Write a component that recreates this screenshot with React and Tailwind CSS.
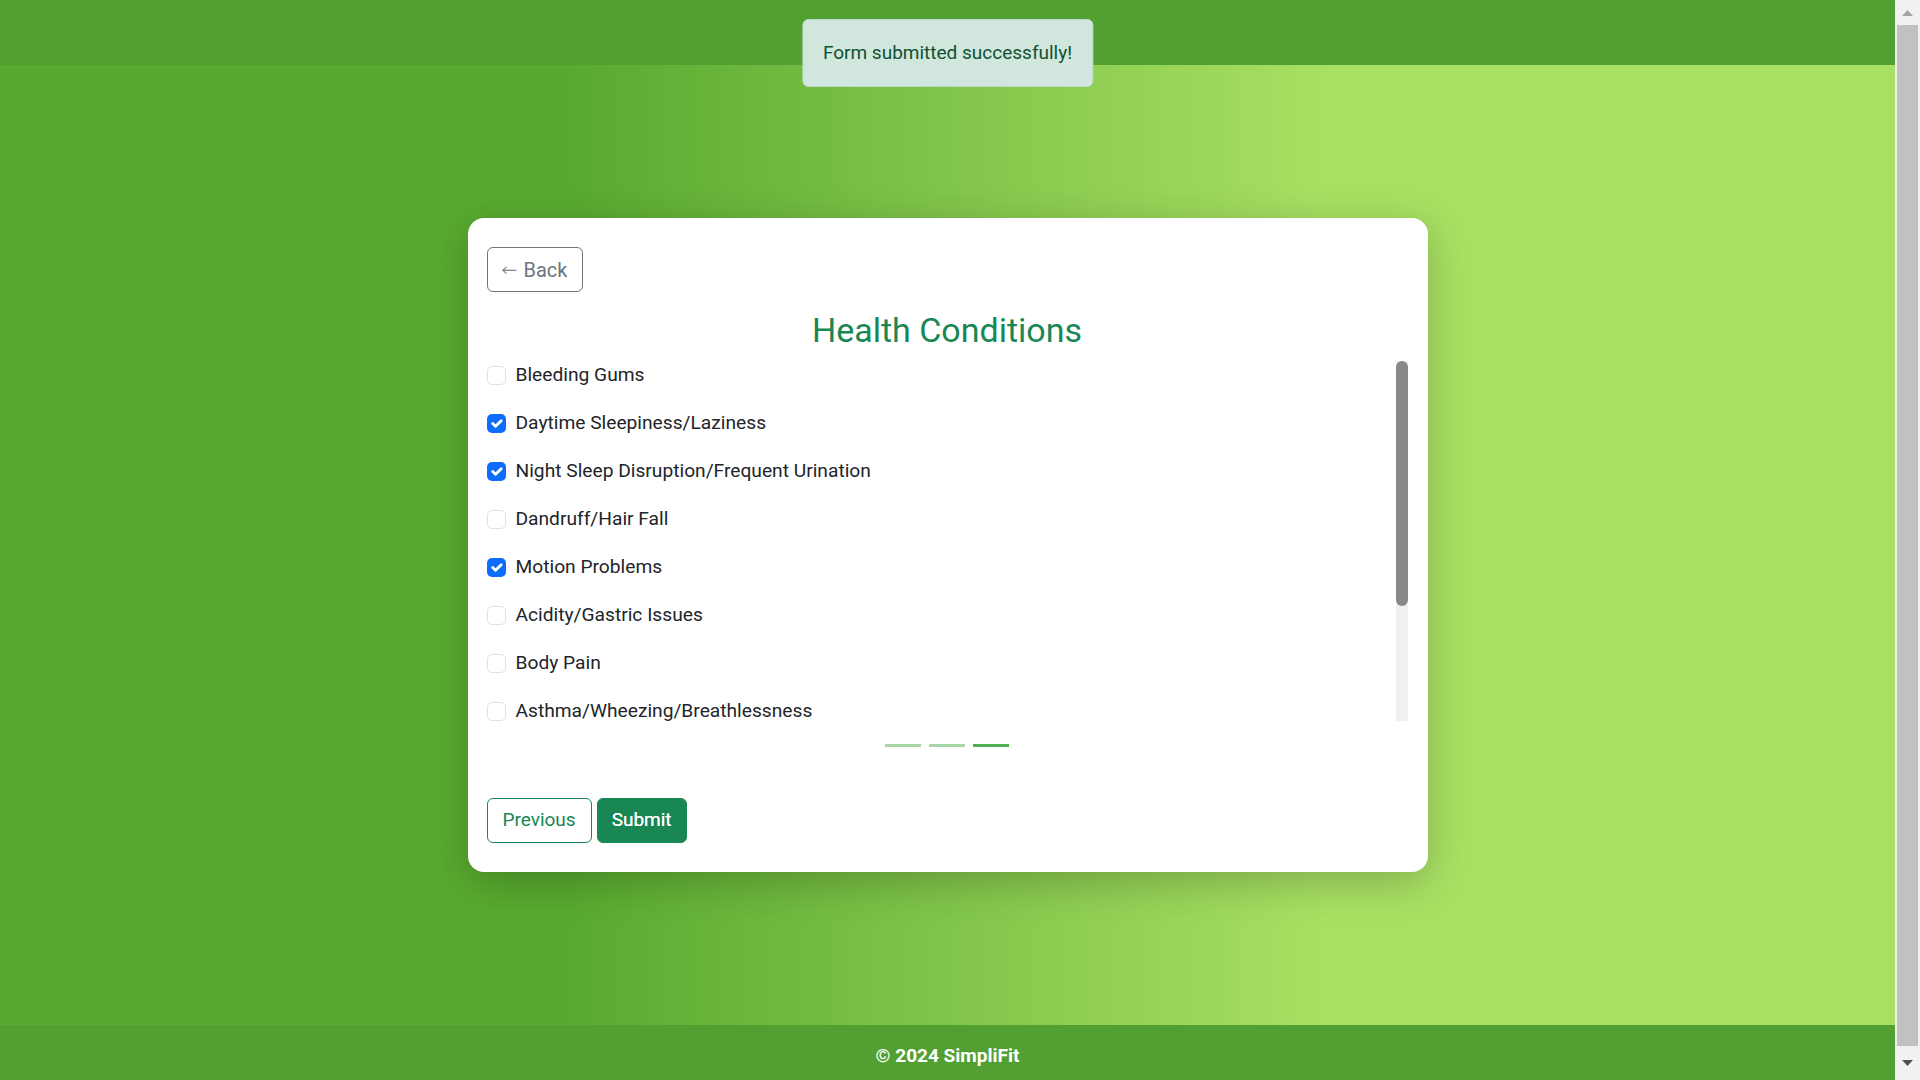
import React from "react";

const items = [
  { label: "Bleeding Gums", checked: false },
  { label: "Daytime Sleepiness/Laziness", checked: true },
  { label: "Night Sleep Disruption/Frequent Urination", checked: true },
  { label: "Dandruff/Hair Fall", checked: false },
  { label: "Motion Problems", checked: true },
  { label: "Acidity/Gastric Issues", checked: false },
  { label: "Body Pain", checked: false },
  { label: "Asthma/Wheezing/Breathlessness", checked: false },
];

function Checkbox({ checked }) {
  if (checked) {
    return (
      <span className="flex h-[19px] w-[19px] shrink-0 items-center justify-center rounded-[5px] bg-[#0d6efd]">
        <svg viewBox="0 0 20 20" className="h-[19px] w-[19px]">
          <path d="m6 10 3 3 6-6" fill="none" stroke="#fff" strokeWidth="3" strokeLinecap="round" strokeLinejoin="round" />
        </svg>
      </span>
    );
  }
  return <span className="h-[19px] w-[19px] shrink-0 rounded-[5px] border border-[#dee2e6] bg-white" />;
}

export default function App() {
  return (
    <div className="flex h-screen w-full overflow-hidden font-['Roboto',sans-serif]">
      <div className="relative flex min-w-0 flex-1 flex-col">
        <header className="h-[65px] shrink-0 bg-[#52a032]" />
        <main className="flex flex-1 items-center justify-center bg-gradient-to-r from-[#58aa2f] from-30% to-[#a8e063] to-70%">
          <div className="flex w-[960px] flex-col rounded-2xl bg-white pb-[29px] pl-[19px] pr-5 pt-[29px] shadow-[0_10px_40px_rgba(0,0,0,0.22)]">
            <div>
              <button className="flex h-[45px] items-center gap-[6px] rounded-[6px] border border-[#6c757d] pl-[14px] pr-[15px] text-[20px] text-[#6c757d]">
                <span className="font-['DejaVu_Sans',sans-serif] text-[19px] font-light leading-none">←</span>
                <span>Back</span>
              </button>
            </div>
            <h2 className="mb-[12px] mt-[19px] text-center text-[34px] font-normal leading-[38px] text-[#198754]">
              Health Conditions
            </h2>
            <div className="flex h-[360px]">
              <div className="flex-1 overflow-hidden pt-[2px]">
                {items.map((it) => (
                  <div key={it.label} className="mb-6 flex h-[24px] items-center gap-[10px] text-[19.2px] leading-[24px] text-[#212529]">
                    <Checkbox checked={it.checked} />
                    <span>{it.label}</span>
                  </div>
                ))}
              </div>
              <div className="flex w-[12px] flex-col bg-[#f0f0f0]">
                <div className="h-[245px] rounded-[6px] bg-[#888]" />
              </div>
            </div>
            <div className="mt-[23px] flex justify-center gap-2">
              <span className="h-[3px] w-9 bg-[#a7d7a8]" />
              <span className="h-[3px] w-9 bg-[#a7d7a8]" />
              <span className="h-[3px] w-9 bg-[#4caf50]" />
            </div>
            <div className="mt-[51px] flex gap-[5px]">
              <button className="flex h-[45px] items-center rounded-[6px] border border-[#198754] bg-white px-[15px] text-[19px] text-[#198754]">
                Previous
              </button>
              <button className="flex h-[45px] items-center rounded-[6px] border border-[#198754] bg-[#198754] px-[14px] text-[19px] font-normal text-white [text-shadow:0_0_0.4px_#fff]">
                Submit
              </button>
            </div>
          </div>
        </main>
        <footer className="h-[55px] shrink-0 bg-[#52a032] pt-[19px] text-center text-[19px] font-bold leading-[24px] text-white">
          © 2024 SimpliFit
        </footer>
        <div className="absolute left-1/2 top-[19px] flex h-[68px] -translate-x-1/2 items-center rounded-[6px] border border-[#badbcc] bg-[#d1e7dd] px-5 text-[19px] text-[#0f5132]">
          Form submitted successfully!
        </div>
      </div>
      <div className="flex w-[25px] shrink-0 flex-col items-center bg-[#f1f1f1]">
        <div className="flex h-[25px] w-full items-center justify-center">
          <svg width="11" height="6" viewBox="0 0 11 6"><path d="M5.5 0 11 6H0z" fill="#a3a3a3" /></svg>
        </div>
        <div className="mx-[2px] w-[21px] flex-1 bg-[#c1c1c1]" />
        <div className="flex h-[34px] w-full items-center justify-center">
          <svg width="11" height="6" viewBox="0 0 11 6"><path d="M0 0h11L5.5 6z" fill="#505050" /></svg>
        </div>
      </div>
    </div>
  );
}
